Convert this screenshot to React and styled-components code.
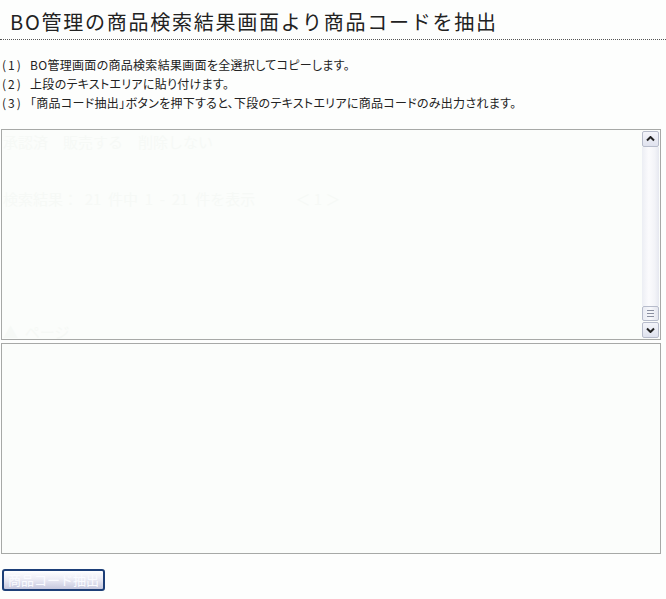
import React from 'react';
import styled, { createGlobalStyle } from 'styled-components';

const GlobalStyle = createGlobalStyle`
  html, body {
    margin: 0;
    padding: 0;
    background: #fdfefd;
  }
  body {
    font-family: "Noto Sans CJK JP", "Noto Sans", sans-serif;
    color: #222;
  }
`;

const Page = styled.div`
  display: flex;
  flex-direction: column;
  width: 666px;
`;

const Title = styled.h1`
  margin: 0;
  padding: 9px 0 0 10px;
  height: 40px;
  box-sizing: border-box;
  border-bottom: 1px dotted #555;
  font-size: 20px;
  font-weight: normal;
  line-height: 26px;
  letter-spacing: 1.75px;
  color: #222;
`;

const Steps = styled.ol`
  list-style: none;
  margin: 15px 0 0;
  padding: 0 0 0 2px;
`;

const Step = styled.li`
  display: flex;
  font-size: 12px;
  line-height: 19px;
  letter-spacing: 0.3px;
  font-feature-settings: "palt";
  color: #222;
`;

const StepNo = styled.span`
  flex: none;
  width: 28px;
  letter-spacing: 2px;
`;

const Box = styled.div`
  display: flex;
  width: 660px;
  height: 211px;
  box-sizing: border-box;
  margin: ${(p) => p.$top || 0}px 0 0 1px;
  border: 1px solid #a7a9a7;
  background: #fbfdfb;
`;

const Area = styled.textarea`
  flex: 1;
  margin: 0;
  padding: 2px 1px;
  border: 0;
  outline: none;
  resize: none;
  overflow: hidden;
  background: transparent;
  font-family: "Noto Sans CJK JP", sans-serif;
  font-size: 15px;
  line-height: 19px;
  color: #f6f9f6;
`;

const ScrollBar = styled.div`
  display: flex;
  flex-direction: column;
  width: 17px;
  padding: 1px 1px 1px 0;
`;

const ArrowButton = styled.div`
  display: flex;
  align-items: center;
  justify-content: center;
  height: 16px;
  box-sizing: border-box;
  border: 1px solid #b7bccb;
  border-radius: 2px;
  background: linear-gradient(#f4f5fa, #dfe2ee);
`;

const Track = styled.div`
  flex: 1;
  background: linear-gradient(to right, #eceef4, #fbfbfd 40%, #f3f4f8 75%, #e6e8f0);
`;

const Thumb = styled(ArrowButton)`
  height: 15px;
  margin-bottom: 1px;
  flex-direction: column;
  gap: 2px;
  background: linear-gradient(to right, #e9ebf3, #f7f8fb 50%, #e3e5ee);
`;

const Grip = styled.span`
  width: 7px;
  height: 1px;
  background: #8a8fa0;
`;

const Chevron = ({ down }) => (
  <svg width="9" height="6" viewBox="0 0 9 6">
    <path
      d={down ? 'M1 1.5 L4.5 5 L8 1.5' : 'M1 4.5 L4.5 1 L8 4.5'}
      fill="none"
      stroke="#222"
      strokeWidth="2"
    />
  </svg>
);

const Extract = styled.button`
  width: 103px;
  height: 22px;
  margin: 15px 0 0 2px;
  padding: 0;
  border: 2px solid #1d3f78;
  border-radius: 3px;
  background: linear-gradient(#ffffff, #ececf5 45%, #c6c8de);
  font-family: "Noto Sans CJK JP", sans-serif;
  font-size: 13px;
  line-height: 18px;
  color: #fafbff;
  cursor: pointer;
`;

const pasted = '承認済　販売する　削除しない\n\n\n検索結果：  21  件中  1  -  21  件を表示            ＜ 1 ＞\n\n\n\n\n\n\n▲  ページ';

const steps = [
  ['(1)', 'BO管理画面の商品検索結果画面を全選択してコピーします。'],
  ['(2)', '上段のテキストエリアに貼り付けます。'],
  ['(3)', '「商品コード抽出」ボタンを押下すると、下段のテキストエリアに商品コードのみ出力されます。'],
];

const App = () => (
  <Page>
    <GlobalStyle />
    <Title>BO管理の商品検索結果画面より商品コードを抽出</Title>
    <Steps>
      {steps.map(([no, text]) => (
        <Step key={no}>
          <StepNo>{no}</StepNo>
          {text}
        </Step>
      ))}
    </Steps>
    <Box $top={17}>
      <Area defaultValue={pasted} />
      <ScrollBar>
        <ArrowButton><Chevron /></ArrowButton>
        <Track />
        <Thumb><Grip /><Grip /><Grip /></Thumb>
        <ArrowButton><Chevron down /></ArrowButton>
      </ScrollBar>
    </Box>
    <Box $top={3}>
      <Area />
    </Box>
    <div>
      <Extract type="button">商品コード抽出</Extract>
    </div>
  </Page>
);

export default App;
